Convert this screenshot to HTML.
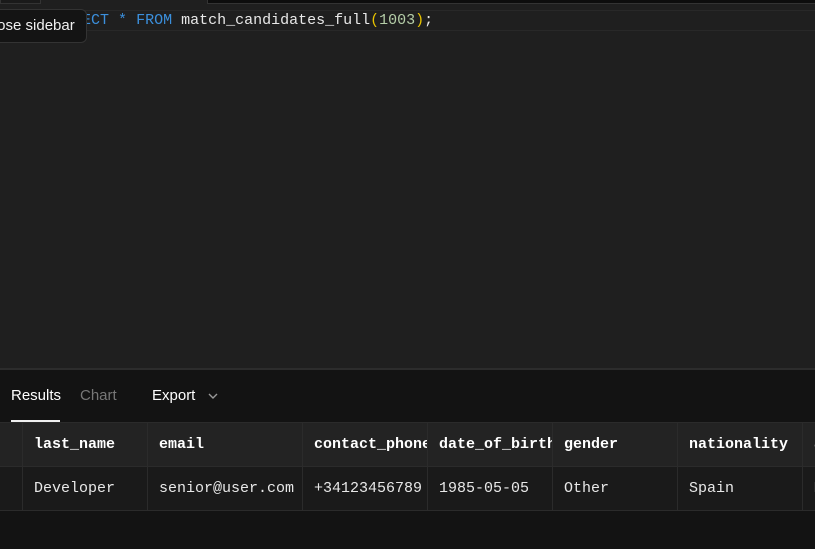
<!DOCTYPE html>
<html><head><style>
*{margin:0;padding:0;box-sizing:border-box}
body{width:815px;height:549px;overflow:hidden;background:#1f1f1f;position:relative;font-family:"Liberation Mono",monospace}
.abs{position:absolute}
.code{left:55px;top:11px;font-size:15px;line-height:20px;color:#e8e8e8;white-space:pre}
.kw{color:#3b8fdc}.par{color:#e6c200}.num{color:#b5cea8}
.tip{left:-6px;top:9px;width:93px;height:34px;background:#141414;border:1px solid #333;border-radius:6px;overflow:hidden}
.tip span{position:absolute;left:-12px;top:0;color:#f0f0f0;font:15px "Liberation Sans",sans-serif;line-height:32px;white-space:nowrap}
.panel{left:0;top:368px;width:815px;height:181px;background:#131313;border-top:2px solid #2c2c2c}
.tab{top:387px;font:15px "Liberation Sans",sans-serif}
table{position:absolute;left:-1px;top:422px;border-collapse:collapse;font-size:15px;table-layout:fixed;width:816px}
td{height:44px;border:1px solid #2b2b2b;padding-left:11px;white-space:nowrap;overflow:hidden}
tr.h td{background:#232323;color:#fff;font-weight:bold}
tr.r td{background:#1a1a1a;color:#e8e8e8}
</style></head><body>
<div class="abs" style="left:0;top:0;width:41px;height:4px;background:#1a1a1a;border:1px solid #333;border-top:none"></div>
<div class="abs" style="left:207px;top:0;width:608px;height:4px;background:#0d0d0d;border-bottom:1px solid #333;border-left:1px solid #333"></div>
<div class="abs" style="left:0;top:10px;width:815px;height:21px;border-top:1px solid #282828;border-bottom:1px solid #282828"></div>
<div class="abs code"><span class="kw">SELECT</span> <span class="kw">*</span> <span class="kw">FROM</span> match_candidates_full<span class="par">(</span><span class="num">1003</span><span class="par">)</span>;</div>
<div class="abs tip"><span>Close sidebar</span></div>
<div class="abs panel"></div>
<div class="abs tab" style="left:11px;color:#fff">Results</div>
<div class="abs tab" style="left:80px;color:#777">Chart</div>
<div class="abs tab" style="left:152px;color:#fff">Export</div>
<svg class="abs" style="left:207px;top:391px" width="12" height="10"><path d="M2 3l4 4 4-4" stroke="#999" stroke-width="1.4" fill="none"/></svg>
<div class="abs" style="left:11px;top:420px;width:49px;height:2px;background:#f0f0f0"></div>
<div class="abs" style="left:0;top:422px;width:815px;height:1px;background:#2b2b2b"></div>
<table>
<colgroup><col style="width:23px"><col style="width:125px"><col style="width:155px"><col style="width:125px"><col style="width:125px"><col style="width:125px"><col style="width:125px"><col style="width:13px"></colgroup>
<tr class="h"><td></td><td>last_name</td><td>email</td><td>contact_phone</td><td>date_of_birth</td><td>gender</td><td>nationality</td><td>a</td></tr>
<tr class="r"><td></td><td>Developer</td><td>senior@user.com</td><td>+34123456789</td><td>1985-05-05</td><td>Other</td><td>Spain</td><td>M</td></tr>
</table>
</body></html>
